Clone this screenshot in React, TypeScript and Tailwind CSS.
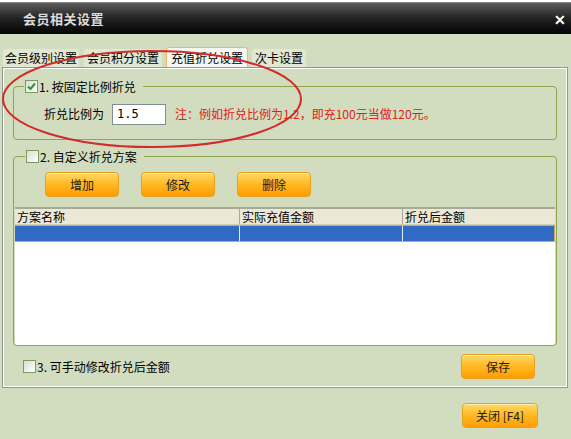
import React from "react";

const font = { fontFamily: '"Noto Sans CJK SC", "Liberation Sans", sans-serif' };

function Check({ checked }: { checked?: boolean }) {
  return (
    <div className="w-[13px] h-[13px] border border-[#7e9a62] bg-gradient-to-br from-[#dcdcd4] to-white flex items-center justify-center">
      {checked && (
        <svg width="9" height="9" viewBox="0 0 9 9">
          <path d="M1 4.5 L3.5 7 L8 1.5" stroke="#21a121" strokeWidth="2" fill="none" />
        </svg>
      )}
    </div>
  );
}

function OrangeBtn({ label, w }: { label: string; w: string }) {
  return (
    <div
      className={`${w} h-[25px] rounded-[4px] border border-[#e8a020] bg-gradient-to-b from-[#ffd860] via-[#ffb820] to-[#ff9c00] flex items-center justify-center text-[12px] text-[#202020] shadow-[inset_0_1px_0_#fff0b0]`}
    >
      {label}
    </div>
  );
}

export default function App() {
  return (
    <div
      className="relative w-[571px] h-[439px] overflow-hidden bg-[#d2ddbf] text-[12px] text-black flex flex-col"
      style={font}
    >
      {/* Title bar */}
      <div className="h-[2px] bg-white" />
      <div className="h-[32px] bg-gradient-to-b from-[#5c5c5c] via-[#222] to-[#050505] border-t border-[#888] flex items-center justify-between pl-[23px] pr-[5px]">
        <span className="text-[13px] font-bold text-[#dcdcdc] tracking-[0.5px]">会员相关设置</span>
        <span className="text-[14px] font-bold text-white leading-none">✕</span>
      </div>

      {/* Tabs */}
      <div className="mt-[13px] flex items-end h-[20px] pl-[3px] gap-[5px]">
        <div className="h-[18px] px-[2px] bg-[#e0e7d2] rounded-t-[2px] flex items-center leading-none">会员级别设置</div>
        <div className="h-[18px] px-[3px] bg-[#e0e7d2] rounded-t-[2px] flex items-center leading-none">会员积分设置</div>
        <div className="h-[20px] px-[4px] bg-[#f6f7f0] border border-b-0 border-[#f0b860] rounded-t-[3px] flex items-center leading-none -mx-[1px]">充值折兑设置</div>
        <div className="h-[18px] px-[3px] bg-[#e0e7d2] rounded-t-[2px] flex items-center leading-none">次卡设置</div>
      </div>

      {/* Panel */}
      <div className="ml-[2px] w-[566px] h-[321px] border border-[#8e9a9a] shadow-[inset_1px_1px_0_#ffffff,inset_-1px_-1px_0_#ffffff] pt-[18px] pl-[10px] pr-[10px] flex flex-col">
        {/* Group 1 */}
        <div className="relative h-[54px] border border-[#8fa64c] rounded-[4px] flex items-center pl-[30px] pt-[2px]">
          <div className="absolute left-[10px] -top-[7px] flex items-center gap-[1px] bg-[#d2ddbf] pl-[1px] pr-[7px] leading-none">
            <Check checked />
            <span>1. 按固定比例折兑</span>
          </div>
          <span>折兑比例为</span>
          <div className="ml-[8px] w-[54px] h-[21px] bg-white border border-[#7f8f8f] flex items-center pl-[4px] text-[12px]" style={{ fontFamily: '"DejaVu Sans Mono", monospace' }}>
            1.5
          </div>
          <span className="ml-[9px] text-[#e0201a]">注：例如折兑比例为1.2，即充100元当做120元。</span>
        </div>

        {/* Group 2 */}
        <div className="relative mt-[16px] h-[190px] border border-[#8fa64c] rounded-[4px] flex flex-col pt-[15px]">
          <div className="absolute left-[11px] -top-[7px] flex items-center gap-[1px] bg-[#d2ddbf] pl-[1px] pr-[7px] leading-none">
            <Check />
            <span>2. 自定义折兑方案</span>
          </div>
          <div className="flex gap-[22px] pl-[31px]">
            <OrangeBtn label="增加" w="w-[74px]" />
            <OrangeBtn label="修改" w="w-[74px]" />
            <OrangeBtn label="删除" w="w-[74px]" />
          </div>
          <div className="mt-[10px] mx-[1px] flex-1 bg-white border-t-2 border-[#a4aa94] flex flex-col rounded-b-[3px] overflow-hidden">
            <div className="h-[16px] bg-[#ebe8d8] flex leading-none items-center border-b border-[#d6cfae]">
              <div className="w-[225px] h-full flex items-center pl-[2px] border-r border-[#aca899]">方案名称</div>
              <div className="w-[163px] h-full flex items-center pl-[2px] border-r border-[#aca899]">实际充值金额</div>
              <div className="flex-1 h-full flex items-center pl-[2px]">折兑后金额</div>
            </div>
            <div className="h-[17px] bg-[#316ac5] border-y border-[#c8aa78] flex">
              <div className="w-[225px] border-r border-[#e8eef8]" />
              <div className="w-[163px] border-r border-[#e8eef8]" />
              <div className="flex-1 border-r border-[#c8aa78]" />
            </div>
            <div className="flex-1 bg-white" />
          </div>
        </div>

        {/* Bottom row */}
        <div className="mt-[8px] flex items-center justify-between pr-[22px]">
          <div className="flex items-center gap-[1px] pl-[10px] leading-none">
            <Check />
            <span>3. 可手动修改折兑后金额</span>
          </div>
          <OrangeBtn label="保存" w="w-[74px]" />
        </div>
      </div>

      {/* Footer */}
      <div className="mt-[15px] flex justify-end pr-[33px]">
        <div className="w-[76px] h-[25px] rounded-[4px] border border-[#e8a020] bg-gradient-to-b from-[#ffd860] via-[#ffb820] to-[#ff9c00] flex items-center justify-center text-[12px] text-[#202020] shadow-[inset_0_1px_0_#fff0b0]">
          关闭 [F4]
        </div>
      </div>

      {/* Red hand-drawn ellipse annotation */}
      <svg className="absolute left-0 top-0 pointer-events-none" width="571" height="439">
        <ellipse cx="152" cy="99" rx="149" ry="48" fill="none" stroke="#d42a2a" strokeWidth="2" />
      </svg>
    </div>
  );
}
